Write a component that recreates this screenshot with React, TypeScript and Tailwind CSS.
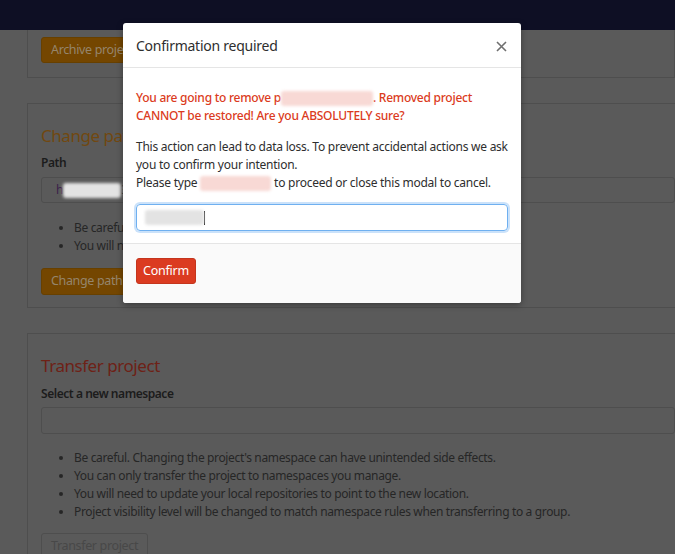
import React from 'react';

const Blur: React.FC<{ w: number; tone?: 'pink' | 'gray' }> = ({ w, tone = 'pink' }) => (
  <span
    className={`inline-block h-[15px] align-middle rounded-[3px] blur-[1.5px] ${
      tone === 'pink' ? 'bg-[#f8d9d5]' : 'bg-[#e3e3e3]'
    }`}
    style={{ width: w }}
  />
);

const App: React.FC = () => {
  return (
    <div className="relative w-[675px] h-[554px] overflow-hidden bg-[#5a5a5a] font-['Noto_Sans',sans-serif] text-[12px] text-[#1c1c1c]">
      {/* Navbar */}
      <div className="h-[30px] bg-[#0e0f24]" />

      {/* Page content (dimmed by the backdrop) */}
      <div className="pl-[27px] tracking-[-0.35px]">
        <div className="border-x border-b border-[#4e4e4e] pt-[7px] pb-[14px] pl-[13px]">
          <button className="h-[26px] px-[9px] rounded-[3px] bg-[#744600] border border-[#674000] text-[12.5px] text-[#95856c]">
            Archive project
          </button>
        </div>

        <div className="mt-[25px] border-y border-l border-[#4e4e4e] pt-[21px] pb-[12px] pl-[13px]">
          <h4 className="text-[17px] leading-[22px] tracking-[-0.45px] text-[#714810]">Change path</h4>
          <div className="mt-[7px] font-semibold text-[12px] leading-[18px] tracking-[-0.45px] text-[#1c1c1c]">Path</div>
          <div className="mt-[5px] h-[26px] border border-[#4e4e4e] rounded-[3px] flex items-center pl-[14px]">
            <span className="text-[#3a1f4a]">h</span>
            <Blur w={58} tone="gray" />
            <span className="text-[#2b2b2b]">3</span>
          </div>
          <ul className="mt-[16px] pl-[33px] list-disc leading-[18px] text-[#262626]">
            <li>Be careful. Changing the project's path can have unintended side effects.</li>
            <li>You will need to update your local repositories to point to the new location.</li>
          </ul>
          <button className="mt-[13px] h-[27px] px-[9px] rounded-[3px] bg-[#744600] border border-[#674000] text-[12.5px] text-[#95856c]">
            Change path
          </button>
        </div>

        <div className="mt-[25px] border-t border-l border-[#4e4e4e] pt-[21px] pl-[13px]">
          <h4 className="text-[17px] leading-[22px] tracking-[-0.45px] text-[#6e2116]">Transfer project</h4>
          <div className="mt-[8px] font-semibold text-[12px] leading-[18px] tracking-[-0.45px] text-[#1c1c1c]">Select a new namespace</div>
          <div className="mt-[4px] h-[27px] border border-[#4e4e4e] rounded-[3px]" />
          <ul className="mt-[15px] pl-[33px] list-disc leading-[18px] text-[#262626]">
            <li>Be careful. Changing the project's namespace can have unintended side effects.</li>
            <li>You can only transfer the project to namespaces you manage.</li>
            <li>You will need to update your local repositories to point to the new location.</li>
            <li>Project visibility level will be changed to match namespace rules when transferring to a group.</li>
          </ul>
          <button className="mt-[12px] h-[27px] px-[9px] rounded-[3px] border border-[#4e4e4e] text-[12.5px] text-[#484848]">
            Transfer project
          </button>
        </div>
      </div>

      {/* Modal */}
      <div className="absolute left-[123px] top-[23px] w-[398px] bg-white rounded-[3px] shadow-[0_2px_6px_rgba(0,0,0,0.35)] overflow-hidden tracking-[-0.25px]">
        <div className="h-[45px] border-b border-[#e5e5e5] flex items-center justify-between pl-[13px] pr-[14px]">
          <span className="text-[14px] text-[#2e2e2e]">Confirmation required</span>
          <svg width="11" height="11" viewBox="0 0 11 11" className="mt-[2px]">
            <path d="M1 1L10 10M10 1L1 10" stroke="#6f6f6f" strokeWidth="1.6" />
          </svg>
        </div>
        <div className="px-[13px] pt-[21px] pb-[12px]">
          <p className="text-[#db3b21] font-medium leading-[17.5px]">
            You are going to remove p<Blur w={92} />. Removed project CANNOT be restored! Are you ABSOLUTELY sure?
          </p>
          <p className="mt-[14px] leading-[18px] text-[#2e2e2e]">
            This action can lead to data loss. To prevent accidental actions we ask you to confirm your intention.
            <br />
            Please type <Blur w={71} /> to proceed or close this modal to cancel.
          </p>
          <div className="mt-[12px] h-[27px] rounded-[4px] border border-[#6fb0f0] shadow-[0_0_0_2px_rgba(140,190,245,0.45)] flex items-center pl-[8px]">
            <Blur w={59} tone="gray" />
            <span className="w-px h-[14px] bg-[#222]" />
          </div>
        </div>
        <div className="h-[60px] bg-[#fafafa] border-t border-[#e5e5e5] pt-[14px] pl-[13px]">
          <button className="h-[26px] w-[60px] rounded-[3px] bg-[#db3b21] border border-[#c4351d] text-white text-[12.5px]">
            Confirm
          </button>
        </div>
      </div>
    </div>
  );
};

export default App;
